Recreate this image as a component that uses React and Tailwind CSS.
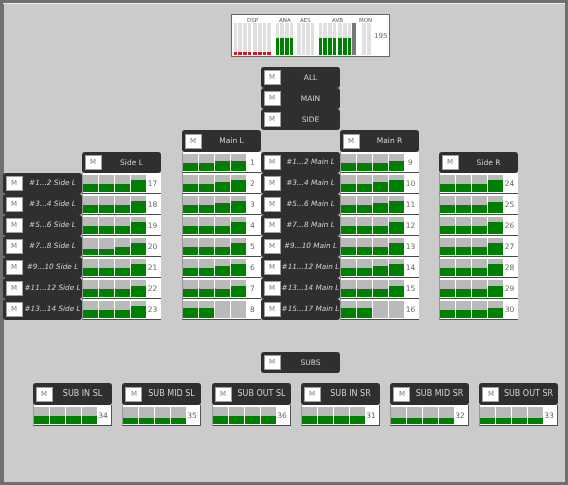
import React from "react";

const Mute = () => (
  <div className="flex h-[15px] w-[17px] shrink-0 items-center justify-center border border-[#a0a0a0] bg-white">
    <span className="text-[7px] text-[#777] will-change-transform">M</span>
  </div>
);

// dark row with a mute button and a label
const Row = ({ label, italic, tall, sub }) => (
  <div
    className={`flex w-[79px] items-center rounded-[3px] bg-[#2f2f2f] pl-[3px] ${
      tall ? "h-[22px]" : "h-[21px]"
    }`}
  >
    <Mute />
    <span
      className={`flex-1 whitespace-nowrap text-center text-[#d0d0d0] will-change-transform ${
        sub ? "text-[8px]" : italic ? "text-[7.3px] italic" : "text-[7.5px]"
      }`}
    >
      {label}
    </span>
  </div>
);

// four level bars and the channel number
const Strip = ({ num, levels }) => (
  <div className="flex h-[21px] w-full border-b border-l border-[#4a4a4a] border-l-[#999] bg-white pt-[2px]">
    <div className="flex h-[17px] gap-px">
      {levels.map((h, i) => (
        <div key={i} className="flex h-[17px] w-[15px] flex-col justify-end bg-[#bababa]">
          <div className="bg-[#008000]" style={{ height: h }} />
        </div>
      ))}
    </div>
    <span className="flex-1 pr-[2px] text-center text-[7.5px] leading-[17px] text-[#666] will-change-transform">
      {num}
    </span>
  </div>
);

const SubStrip = ({ label, num, level }) => (
  <div className="w-[79px]">
    <Row label={label} tall sub />
    <div className="border-r border-[#555]">
      <Strip num={num} levels={[level, level, level, level]} />
    </div>
  </div>
);

const sideL = [
  [17, [8, 8, 8, 12]],
  [18, [8, 8, 8, 12]],
  [19, [8, 8, 8, 12]],
  [20, [6, 6, 8, 12]],
  [21, [8, 8, 8, 12]],
  [22, [8, 8, 8, 11]],
  [23, [8, 8, 8, 12]],
];
const mainL = [
  [1, [8, 8, 10, 10]],
  [2, [8, 8, 10, 12]],
  [3, [8, 8, 10, 12]],
  [4, [8, 8, 8, 12]],
  [5, [8, 8, 8, 12]],
  [6, [8, 8, 10, 12]],
  [7, [8, 8, 8, 11]],
  [8, [10, 10, 0, 0]],
];
const mainR = [
  [9, [8, 8, 8, 10]],
  [10, [8, 8, 10, 12]],
  [11, [8, 8, 10, 12]],
  [12, [8, 8, 8, 12]],
  [13, [8, 8, 8, 12]],
  [14, [8, 8, 10, 12]],
  [15, [8, 8, 8, 11]],
  [16, [10, 10, 0, 0]],
];
const sideR = [
  [24, [8, 8, 8, 12]],
  [25, [8, 8, 8, 11]],
  [26, [8, 8, 8, 12]],
  [27, [8, 8, 8, 12]],
  [28, [8, 8, 8, 12]],
  [29, [8, 8, 8, 11]],
  [30, [8, 8, 8, 10]],
];
const sideLabels = ["#1...2 Side L", "#3...4 Side L", "#5...6 Side L", "#7...8 Side L", "#9...10 Side L", "#11...12 Side L", "#13...14 Side L"];
const mainLabels = ["#1...2 Main L", "#3...4 Main L", "#5...6 Main L", "#7...8 Main L", "#9...10 Main L", "#11...12 Main L", "#13...14 Main L", "#15...17 Main L"];
const subs = [
  ["SUB IN SL", 34, 8],
  ["SUB MID SL", 35, 6],
  ["SUB OUT SL", 36, 8],
  ["SUB IN SR", 31, 8],
  ["SUB MID SR", 32, 6],
  ["SUB OUT SR", 33, 6],
];

const TopBar = ({ h, color }) => (
  <div className="flex h-[31.5px] w-[3.67px] flex-col justify-end bg-[#e0e0e0]">
    <div className={color} style={{ height: h }} />
  </div>
);

const Bars = ({ n, h, color }) => (
  <div className="flex gap-px">
    {Array.from({ length: n }).map((_, i) => (
      <TopBar key={i} h={h} color={color} />
    ))}
  </div>
);

const Group = ({ label, className, children }) => (
  <div className={className}>
    <div className="flex h-[8px] justify-center whitespace-nowrap pt-px text-[5.5px] leading-[8px] text-[#555]">
      <span className="will-change-transform">{label}</span>
    </div>
    <div className="flex">{children}</div>
  </div>
);

const Meter = () => (
  <div className="ml-[228px] mt-[10px] flex h-[43px] w-[159px] border border-[#666] bg-white pl-[1.7px]">
    <Group label="DSP">
      <Bars n={4} h={3} color="bg-[#c2202c]" />
      <div className="w-[2px]" />
      <Bars n={4} h={3} color="bg-[#c2202c]" />
    </Group>
    <Group label="ANA" className="ml-[4.7px]">
      <Bars n={4} h={17} color="bg-[#008000]" />
    </Group>
    <Group label="AES" className="ml-[3.6px]">
      <Bars n={4} h={0} color="bg-[#008000]" />
    </Group>
    <Group label="AVB" className="ml-[4.3px]">
      <Bars n={4} h={17} color="bg-[#008000]" />
      <div className="w-[2px]" />
      <Bars n={3} h={17} color="bg-[#008000]" />
      <div className="ml-px h-[31.5px] w-[4px] bg-[#777]" />
    </Group>
    <Group label="MON" className="ml-[4px] w-[8.67px] pl-[2px]">
      <Bars n={2} h={0} color="bg-[#008000]" />
    </Group>
    <span className="ml-[5px] self-center pt-px text-[7px] text-[#666] will-change-transform">195</span>
  </div>
);

export default function App() {
  return (
    <div className="h-[485px] w-[568px] bg-[#6f6f6f] pb-[3px] pl-[3px] pr-[3px] pt-[3px] font-['DejaVu_Sans',sans-serif]">
      <div className="h-full overflow-hidden border-t border-[#efefef] bg-[#cbcbcb] shadow-[inset_1px_0_0_#6f6f6f]">
        <Meter />

        <div className="mt-[10px] flex items-start">
          <div className="mt-[106px] flex flex-col">
            {sideLabels.map((l) => (
              <Row key={l} label={l} italic />
            ))}
          </div>
          <div className="mt-[85px] flex w-[79px] flex-col">
            <Row label="Side L" />
            {sideL.map(([n, v]) => (
              <Strip key={n} num={n} levels={v} />
            ))}
          </div>
          <div className="ml-[21px] mt-[63px] flex w-[79px] flex-col">
            <Row label="Main L" tall />
            {mainL.map(([n, v]) => (
              <Strip key={n} num={n} levels={v} />
            ))}
          </div>
          <div className="flex flex-col">
            <Row label="ALL" />
            <Row label="MAIN" />
            <Row label="SIDE" />
            <div className="h-[22px]" />
            {mainLabels.map((l) => (
              <Row key={l} label={l} italic />
            ))}
          </div>
          <div className="mt-[63px] flex w-[79px] flex-col">
            <Row label="Main R" tall />
            {mainR.map(([n, v]) => (
              <Strip key={n} num={n} levels={v} />
            ))}
          </div>
          <div className="ml-[20px] mt-[85px] flex w-[79px] flex-col">
            <Row label="Side R" />
            {sideR.map(([n, v]) => (
              <Strip key={n} num={n} levels={v} />
            ))}
          </div>
        </div>

        <div className="ml-[258px] mt-[32px]">
          <Row label="SUBS" />
        </div>

        <div className="ml-[30px] mt-[10px] flex gap-[10.3px]">
          {subs.map(([l, n, v]) => (
            <SubStrip key={l} label={l} num={n} level={v} />
          ))}
        </div>
      </div>
    </div>
  );
}
